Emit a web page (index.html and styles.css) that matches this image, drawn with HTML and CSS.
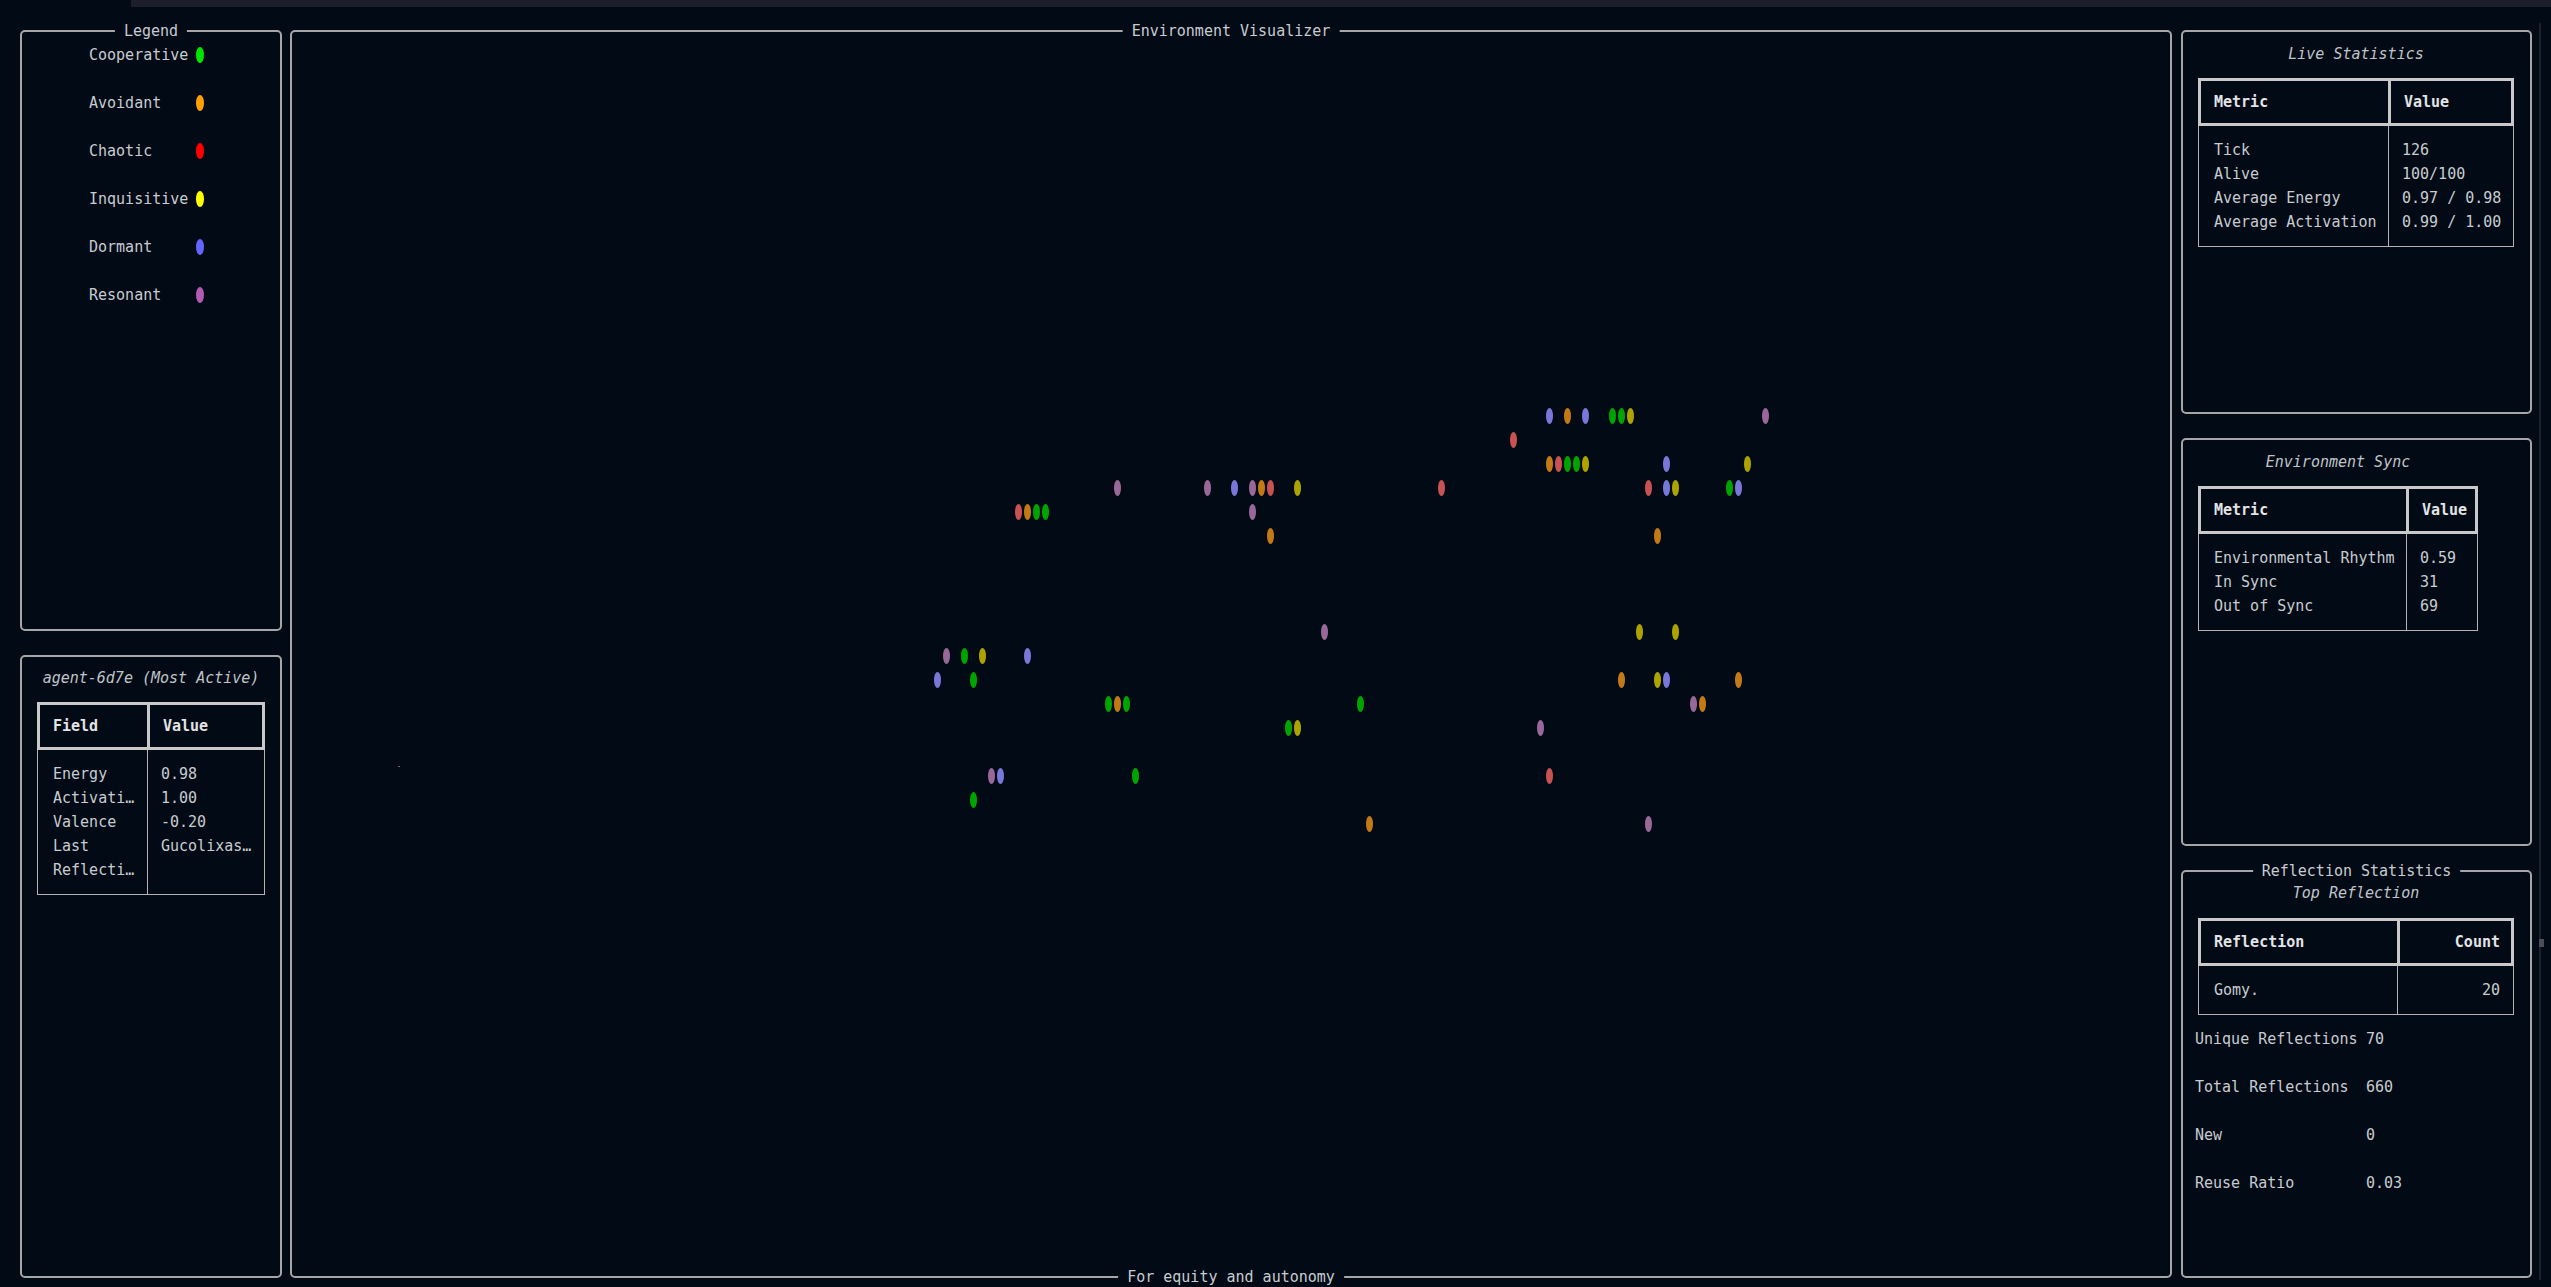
FILE: index.html
```html
<!DOCTYPE html>
<html>
<head>
<meta charset="utf-8">
<link rel="stylesheet" href="styles.css">
</head>
<body>
<div class="topband"></div>
<div class="app">
  <div class="leftcol">
    <section class="box legend">
      <span class="btitle">Legend</span>
      <div class="lrow"><span class="llabel">Cooperative</span><span class="ldot c-g"></span></div>
      <div class="lrow"><span class="llabel">Avoidant</span><span class="ldot c-o"></span></div>
      <div class="lrow"><span class="llabel">Chaotic</span><span class="ldot c-r"></span></div>
      <div class="lrow"><span class="llabel">Inquisitive</span><span class="ldot c-y"></span></div>
      <div class="lrow"><span class="llabel">Dormant</span><span class="ldot c-b"></span></div>
      <div class="lrow"><span class="llabel">Resonant</span><span class="ldot c-p"></span></div>
    </section>
    <section class="box agent">
      <div class="tblwrap t-agent">
        <div class="ttitle">agent-6d7e (Most Active)</div>
        <div class="thead"><div class="hc">Field</div><div class="hc hc2">Value</div></div>
        <div class="tbody">
          <div class="bc">Energy<br>Activati…<br>Valence<br>Last<br>Reflecti…</div>
          <div class="bc bc2">0.98<br>1.00<br>-0.20<br>Gucolixas…<br>&nbsp;</div>
        </div>
      </div>
    </section>
  </div>

  <section class="box viz">
    <span class="btitle">Environment Visualizer</span>
    <span class="btitle bottom">For equity and autonomy</span>
    <div class="speck"></div>
    <i class="d b" style="left:1254px;top:376px"></i>
    <i class="d o" style="left:1272px;top:376px"></i>
    <i class="d b" style="left:1290px;top:376px"></i>
    <i class="d g" style="left:1317px;top:376px"></i>
    <i class="d g" style="left:1326px;top:376px"></i>
    <i class="d y" style="left:1335px;top:376px"></i>
    <i class="d p" style="left:1470px;top:376px"></i>

    <i class="d r" style="left:1218px;top:400px"></i>

    <i class="d o" style="left:1254px;top:424px"></i>
    <i class="d r" style="left:1263px;top:424px"></i>
    <i class="d g" style="left:1272px;top:424px"></i>
    <i class="d g" style="left:1281px;top:424px"></i>
    <i class="d y" style="left:1290px;top:424px"></i>
    <i class="d b" style="left:1371px;top:424px"></i>
    <i class="d y" style="left:1452px;top:424px"></i>

    <i class="d p" style="left:822px;top:448px"></i>
    <i class="d p" style="left:912px;top:448px"></i>
    <i class="d b" style="left:939px;top:448px"></i>
    <i class="d p" style="left:957px;top:448px"></i>
    <i class="d o" style="left:966px;top:448px"></i>
    <i class="d r" style="left:975px;top:448px"></i>
    <i class="d y" style="left:1002px;top:448px"></i>
    <i class="d r" style="left:1146px;top:448px"></i>
    <i class="d r" style="left:1353px;top:448px"></i>
    <i class="d b" style="left:1371px;top:448px"></i>
    <i class="d y" style="left:1380px;top:448px"></i>
    <i class="d g" style="left:1434px;top:448px"></i>
    <i class="d b" style="left:1443px;top:448px"></i>

    <i class="d r" style="left:723px;top:472px"></i>
    <i class="d o" style="left:732px;top:472px"></i>
    <i class="d g" style="left:741px;top:472px"></i>
    <i class="d g" style="left:750px;top:472px"></i>
    <i class="d p" style="left:957px;top:472px"></i>

    <i class="d o" style="left:975px;top:496px"></i>
    <i class="d o" style="left:1362px;top:496px"></i>

    <i class="d p" style="left:1029px;top:592px"></i>
    <i class="d y" style="left:1344px;top:592px"></i>
    <i class="d y" style="left:1380px;top:592px"></i>

    <i class="d p" style="left:651px;top:616px"></i>
    <i class="d g" style="left:669px;top:616px"></i>
    <i class="d y" style="left:687px;top:616px"></i>
    <i class="d b" style="left:732px;top:616px"></i>

    <i class="d b" style="left:642px;top:640px"></i>
    <i class="d g" style="left:678px;top:640px"></i>
    <i class="d o" style="left:1326px;top:640px"></i>
    <i class="d y" style="left:1362px;top:640px"></i>
    <i class="d b" style="left:1371px;top:640px"></i>
    <i class="d o" style="left:1443px;top:640px"></i>

    <i class="d g" style="left:813px;top:664px"></i>
    <i class="d o" style="left:822px;top:664px"></i>
    <i class="d g" style="left:831px;top:664px"></i>
    <i class="d g" style="left:1065px;top:664px"></i>
    <i class="d p" style="left:1398px;top:664px"></i>
    <i class="d o" style="left:1407px;top:664px"></i>

    <i class="d g" style="left:993px;top:688px"></i>
    <i class="d y" style="left:1002px;top:688px"></i>
    <i class="d p" style="left:1245px;top:688px"></i>

    <i class="d p" style="left:696px;top:736px"></i>
    <i class="d b" style="left:705px;top:736px"></i>
    <i class="d g" style="left:840px;top:736px"></i>
    <i class="d r" style="left:1254px;top:736px"></i>

    <i class="d g" style="left:678px;top:760px"></i>

    <i class="d o" style="left:1074px;top:784px"></i>
    <i class="d p" style="left:1353px;top:784px"></i>
  </section>

  <div class="rightcol">
    <section class="box live">
      <div class="tblwrap t-live">
        <div class="ttitle">Live Statistics</div>
        <div class="thead"><div class="hc">Metric</div><div class="hc hc2">Value</div></div>
        <div class="tbody">
          <div class="bc">Tick<br>Alive<br>Average Energy<br>Average Activation</div>
          <div class="bc bc2">126<br>100/100<br>0.97 / 0.98<br>0.99 / 1.00</div>
        </div>
      </div>
    </section>
    <section class="box sync">
      <div class="tblwrap t-sync">
        <div class="ttitle">Environment Sync</div>
        <div class="thead"><div class="hc">Metric</div><div class="hc hc2">Value</div></div>
        <div class="tbody">
          <div class="bc">Environmental Rhythm<br>In Sync<br>Out of Sync</div>
          <div class="bc bc2">0.59<br>31<br>69</div>
        </div>
      </div>
    </section>
    <section class="box refl">
      <span class="btitle">Reflection Statistics</span>
      <div class="tblwrap t-refl">
        <div class="ttitle">Top Reflection</div>
        <div class="thead"><div class="hc">Reflection</div><div class="hc hc2 right">Count</div></div>
        <div class="tbody">
          <div class="bc">Gomy.</div>
          <div class="bc bc2 right">20</div>
        </div>
      </div>
      <div class="stats">
        <div class="srow"><span class="slabel">Unique Reflections</span><span>70</span></div>
        <div class="srow"><span class="slabel">Total Reflections</span><span>660</span></div>
        <div class="srow"><span class="slabel">New</span><span>0</span></div>
        <div class="srow"><span class="slabel">Reuse Ratio</span><span>0.03</span></div>
      </div>
    </section>
  </div>

  <div class="scroll"><div class="thumb"></div></div>
</div>
</body>
</html>
```

FILE: styles.css
```css
html {
  overflow: hidden;
  background: #010a15;
  height: 1287px;
}

body {
  margin: 0;
  padding: 0;
  height: 1287px;
  background: #010a15;
  color: #c8ccd0;
  font-family: "DejaVu Sans Mono", "Liberation Mono", monospace;
  font-size: 15px;
  line-height: 24px;
}

.topband {
  height: 7px;
  margin-left: 131px;
  background: #1d1e2c;
}

.app {
  display: flex;
  padding: 23px 0 0 20px;
  height: 1248px;
}

.box {
  position: relative;
  box-sizing: border-box;
  border: 2px solid #a6a6a6;
  border-radius: 5px;
  padding: 10px 15px;
}

.btitle {
  position: absolute;
  top: -13px;
  left: 50%;
  transform: translateX(-50%);
  background: #010a15;
  padding: 0 9px;
  white-space: nowrap;
  color: #c8ccd0;
  line-height: 24px;
}

.btitle.bottom {
  top: auto;
  bottom: -13px;
}

.leftcol {
  width: 262px;
  display: flex;
  flex-direction: column;
  gap: 24px;
}

.legend {
  height: 601px;
  padding: 11px 0 0 67px;
}

.lrow {
  display: flex;
  align-items: center;
  height: 24px;
  margin-bottom: 24px;
}

.llabel {
  width: 107px;
  white-space: nowrap;
}

.ldot {
  width: 8px;
  height: 16px;
  border-radius: 50%;
}

.c-g { background: #00e600; }
.c-o { background: #ffa000; }
.c-r { background: #ff0000; }
.c-y { background: #ffff00; }
.c-b { background: #6464ff; }
.c-p { background: #b05ab4; }

.agent {
  flex: 1;
  padding-top: 9px;
}

.viz {
  width: 1882px;
  margin-left: 8px;
  height: 1248px;
}

.d {
  position: absolute;
  width: 7px;
  height: 16px;
  border-radius: 50%;
}

.d.g { background: #00a400; }
.d.o { background: #c47a14; }
.d.r { background: #c85252; }
.d.y { background: #ada300; }
.d.b { background: #7878d8; }
.d.p { background: #9a6898; }

.speck {
  position: absolute;
  left: 106px;
  top: 734px;
  width: 2px;
  height: 1px;
  background: #6a6a6a;
}

.rightcol {
  width: 351px;
  margin-left: 9px;
  display: flex;
  flex-direction: column;
  gap: 24px;
}

.live { height: 384px; }
.sync { height: 408px; }
.refl { height: 408px; padding-top: 9px; }

/* tables */
.tblwrap {
  width: var(--w);
}

.ttitle {
  text-align: center;
  font-style: italic;
  color: #c0c4c8;
  height: 24px;
  margin-bottom: 12px;
  white-space: nowrap;
}

.thead {
  display: grid;
  grid-template-columns: calc(var(--c1) - 3px) 1fr;
  border: 3px solid #c9c9c9;
  height: 48px;
  box-sizing: border-box;
}

.hc {
  font-weight: bold;
  color: #e2e4e6;
  padding: 9px 11px 9px 13px;
  white-space: nowrap;
}

.hc2 {
  border-left: 3px solid #c9c9c9;
}

.tbody {
  display: grid;
  grid-template-columns: calc(var(--c1) - 1px) 1fr;
  border: 1px solid #b4b4b4;
  border-top: 0;
}

.bc {
  padding: 12px 13px 12px 15px;
  white-space: nowrap;
}

.bc2 {
  border-left: 1px solid #b4b4b4;
  padding-left: 13px;
}

.right {
  text-align: right;
}

.t-agent { --w: 228px; --c1: 110px; }
.t-live { --w: 316px; --c1: 190px; }
.t-sync { --w: 280px; --c1: 208px; }
.t-refl { --w: 316px; --c1: 199px; }

.t-refl .ttitle { margin-bottom: 13px; }

.stats {
  margin-top: 12px;
  margin-left: -3px;
}

.srow {
  display: flex;
  height: 24px;
  margin-bottom: 24px;
  white-space: nowrap;
}

.slabel {
  width: 171px;
}

.scroll {
  position: relative;
  width: 2px;
  margin-left: 7px;
  background: #1a212c;
  height: 1257px;
  margin-top: -7px;
}

.thumb {
  position: absolute;
  left: 0;
  top: 916px;
  width: 5px;
  height: 8px;
  background: #4a4f57;
}
```
